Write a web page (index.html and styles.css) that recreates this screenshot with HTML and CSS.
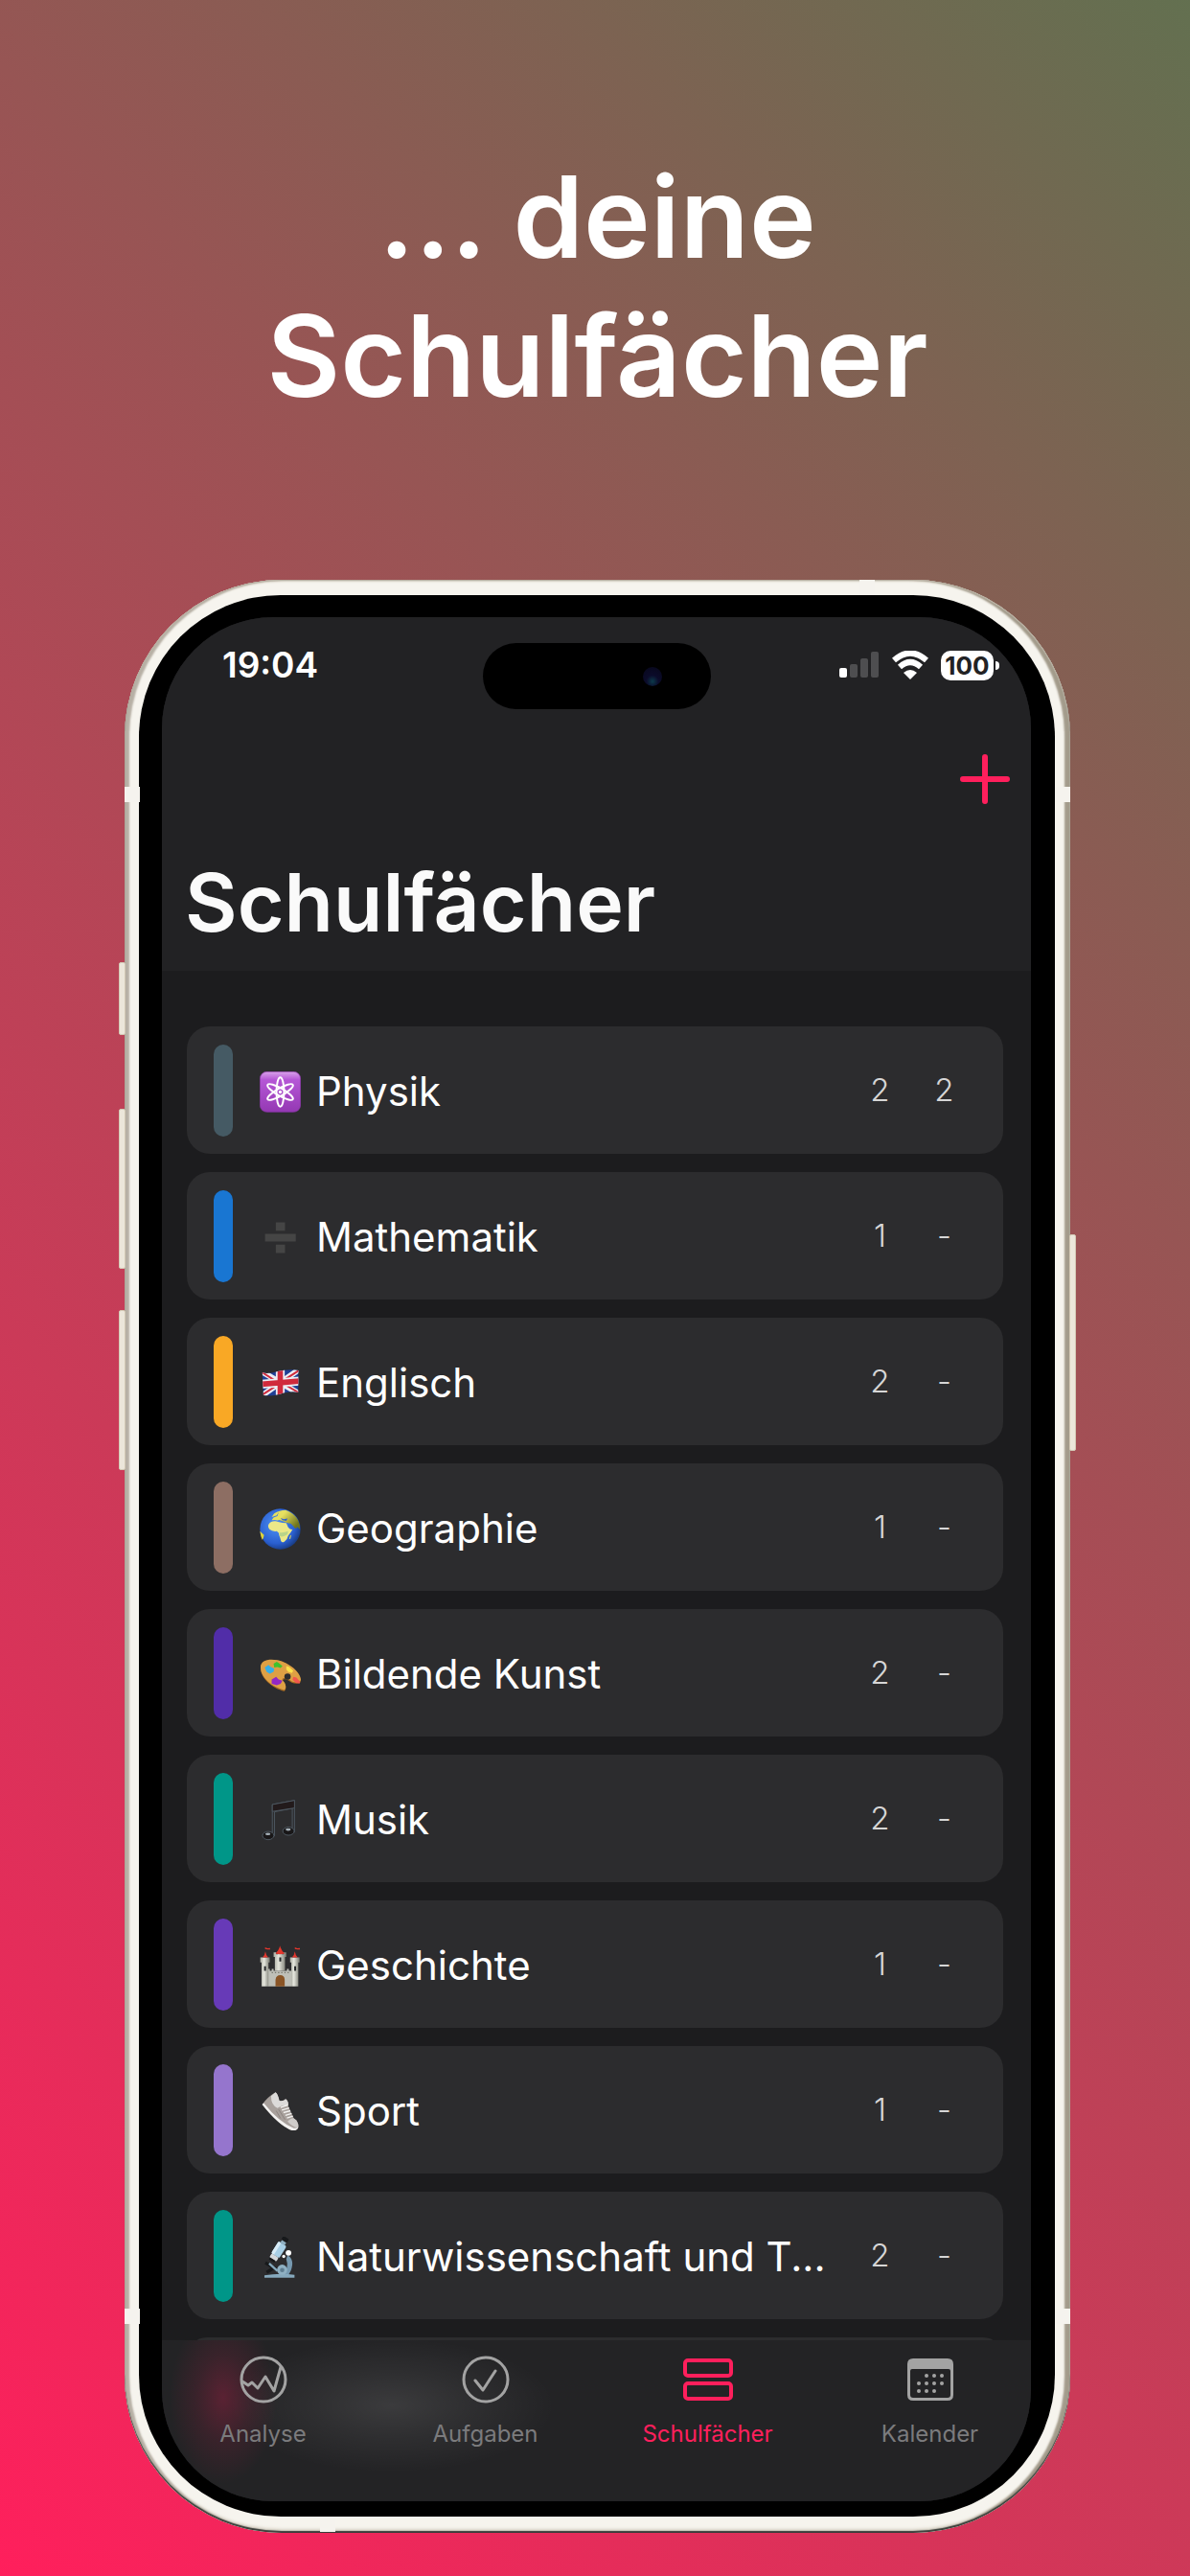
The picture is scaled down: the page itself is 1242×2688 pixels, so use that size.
FILE: index.html
```html
<!DOCTYPE html>
<html lang="de">
<head>
    <meta charset="UTF-8">
    <meta name="viewport" content="width=device-width, initial-scale=1.0">
    <title>Schulfächer</title>
    <link rel="stylesheet" href="styles.css">
</head>
<body>

<h1 class="headline">... deine<br>Schulfächer</h1>

<div class="phone">
    <span class="side-button mute"></span>
    <span class="side-button volume-up"></span>
    <span class="side-button volume-down"></span>
    <span class="side-button power"></span>
    <span class="antenna antenna-top"></span>
    <span class="antenna antenna-bottom"></span>
    <span class="antenna antenna-left upper"></span>
    <span class="antenna antenna-left lower"></span>
    <span class="antenna antenna-right upper"></span>
    <span class="antenna antenna-right lower"></span>

    <div class="bezel">
        <div class="screen">
            <header class="header">
                <div class="status-bar">
                    <span class="time">19:04</span>
                    <span class="island"><span class="camera"></span></span>
                    <span class="status-icons">
                        <svg class="signal" viewBox="0 0 42 28">
                            <rect x="0" y="17" width="8" height="10" rx="2" fill="#fff"/>
                            <rect x="11" y="13" width="8" height="14" rx="2" fill="#4e4e50"/>
                            <rect x="22" y="7" width="8" height="20" rx="2" fill="#4e4e50"/>
                            <rect x="33" y="0" width="8" height="27" rx="2" fill="#4e4e50"/>
                        </svg>
                        <svg class="wifi" viewBox="0 0 40 30">
                            <path d="M3 10Q20 -5 37 10" fill="none" stroke="#fff" stroke-width="6"/>
                            <path d="M9 17Q20 7 31 17" fill="none" stroke="#fff" stroke-width="6"/>
                            <path d="M13 23Q20 17 27 23L20 30Z" fill="#fff"/>
                        </svg>
                        <span class="battery">100</span>
                    </span>
                </div>
                <button class="add-button" type="button" aria-label="+">
                    <svg viewBox="0 0 52 52">
                        <path d="M26 3V49M3 26H49" stroke="#ff1f5c" stroke-width="6" stroke-linecap="round"/>
                    </svg>
                </button>
                <h2 class="title">Schulfächer</h2>
            </header>

            <ul class="subjects">
                <li class="subject">
                    <span class="color slate"></span>
                    <svg class="emoji" viewBox="0 0 130 130">
                        <defs>
                            <linearGradient id="atomBg" x1="0" y1="0" x2="0" y2="1">
                                <stop offset="0" stop-color="#d9a3ea"/>
                                <stop offset=".2" stop-color="#b557d6"/>
                                <stop offset="1" stop-color="#9438b3"/>
                            </linearGradient>
                        </defs>
                        <rect x="1" y="1" width="128" height="127" rx="22" fill="url(#atomBg)" stroke="#8d36ac" stroke-width="2"/>
                        <g fill="none" stroke="#fff" stroke-width="6">
                            <ellipse cx="65" cy="65" rx="12" ry="46"/>
                            <ellipse cx="65" cy="65" rx="12" ry="46" transform="rotate(60 65 65)"/>
                            <ellipse cx="65" cy="65" rx="12" ry="46" transform="rotate(120 65 65)"/>
                        </g>
                        <circle cx="65" cy="65" r="5" fill="#fff"/>
                    </svg>
                    <span class="name">Physik</span>
                    <span class="count">2</span>
                    <span class="count">2</span>
                </li>
                <li class="subject">
                    <span class="color blue"></span>
                    <svg class="emoji" viewBox="0 0 130 130">
                        <path d="M51 17h29v26H51zM17 53h97v24H17zM51 87h29v26H51z" fill="#454545"/>
                    </svg>
                    <span class="name">Mathematik</span>
                    <span class="count">1</span>
                    <span class="count">-</span>
                </li>
                <li class="subject">
                    <span class="color orange"></span>
                    <svg class="emoji" viewBox="0 0 130 130">
                        <defs>
                            <clipPath id="flag">
                                <path d="M8 30C35 42 70 14 123 24L122 93C80 84 55 110 12 103Z"/>
                            </clipPath>
                        </defs>
                        <g clip-path="url(#flag)">
                            <path d="M0 10H130V120H0Z" fill="#1f3f94"/>
                            <path d="M4 26L126 99M4 106L126 20" stroke="#eceef4" stroke-width="18"/>
                            <path d="M4 28L64 66M68 62L126 96M4 104L62 66M68 60L126 23" stroke="#d02a3c" stroke-width="6"/>
                            <path d="M65 15V115M0 68Q60 64 130 57" stroke="#eceef4" stroke-width="28" fill="none"/>
                            <path d="M65 15V115M0 68Q60 64 130 57" stroke="#d02a3c" stroke-width="17" fill="none"/>
                        </g>
                    </svg>
                    <span class="name">Englisch</span>
                    <span class="count">2</span>
                    <span class="count">-</span>
                </li>
                <li class="subject">
                    <span class="color brown"></span>
                    <svg class="emoji" viewBox="0 0 130 130">
                        <defs>
                            <radialGradient id="sea" cx=".4" cy=".4" r=".65">
                                <stop offset="0" stop-color="#4f93f5"/>
                                <stop offset=".7" stop-color="#2a5fd0"/>
                                <stop offset="1" stop-color="#173a80"/>
                            </radialGradient>
                            <linearGradient id="land" x1="0" y1="0" x2="1" y2=".6">
                                <stop offset=".4" stop-color="#e6e060"/>
                                <stop offset="1" stop-color="#6f741e"/>
                            </linearGradient>
                        </defs>
                        <circle cx="65" cy="65" r="64" fill="url(#sea)"/>
                        <path d="M38 27L46 16Q62 5 82 5Q108 14 121 36Q128 50 127 66L119 58Q113 68 107 57L99 48L86 45L72 40L62 36L56 38L48 36L38 37L44 29L56 24L60 12L54 22Z" fill="url(#land)"/>
                        <path d="M66 30L76 34L88 32L84 39L72 37Z" fill="#2a5fd0"/>
                        <path d="M27 54Q30 43 42 41Q50 39 58 42Q72 46 84 46L90 60Q95 68 104 66Q98 78 90 86Q88 98 78 105Q70 110 67 102Q65 92 62 86Q62 76 54 72Q40 74 31 66Q26 60 27 54Z" fill="#ece888"/>
                        <path d="M62 76Q76 78 90 72L88 82Q74 92 64 88Z" fill="#b9d489"/>
                        <path d="M96 86l4 -3l-3 13l-4 1z" fill="#d8d35c"/>
                        <path d="M1 72L14 84Q12 96 8 99Q3 88 1 72Z" fill="#ddd33c"/>
                    </svg>
                    <span class="name">Geographie</span>
                    <span class="count">1</span>
                    <span class="count">-</span>
                </li>
                <li class="subject">
                    <span class="color indigo"></span>
                    <svg class="emoji" viewBox="0 0 130 130">
                        <path d="M3 42C4 22 28 14 55 20C95 28 128 60 130 84C128 96 112 94 101 90C90 82 74 74 73 85C84 93 86 112 78 117C40 108 2 76 3 42Z" fill="#a66a22"/>
                        <path d="M3 40C4 20 28 14 55 19C95 27 128 58 130 80C128 92 112 90 101 86C90 78 72 70 71 82C82 90 86 108 78 113C40 104 2 74 3 40Z" fill="#dea044"/>
                        <circle cx="88" cy="71" r="10" fill="#2c2c2e"/>
                        <path d="M16 42l12 -8l6 6l12 6l-2 10l-12 6l-10 -6z" fill="#36aee8"/>
                        <path d="M44 30l10 -6l6 4l12 10l-6 6l-10 -3l-10 1z" fill="#3fc22e"/>
                        <path d="M84 38l8 2l14 12l-4 8l-12 -4l-6 -8z" fill="#fbe04a"/>
                        <path d="M106 72l10 2l12 14l-2 5l-12 -2l-10 -10z" fill="#f4574c"/>
                        <path d="M38 80l14 -8l8 8l12 4l-6 10l-12 4l-16 -4z" fill="#9227c4"/>
                    </svg>
                    <span class="name">Bildende Kunst</span>
                    <span class="count">2</span>
                    <span class="count">-</span>
                </li>
                <li class="subject">
                    <span class="color teal"></span>
                    <svg class="emoji" viewBox="0 0 130 130">
                        <g fill="#191718" stroke="#4d5760" stroke-width="3">
                            <path d="M40 15L110 2V102H103V27L47 38V114H40Z" fill="none"/>
                            <path d="M40 15L110 2V26L40 37Z" fill="#221a1b"/>
                            <ellipse cx="27" cy="113" rx="18" ry="13"/>
                            <ellipse cx="91" cy="99" rx="18" ry="13"/>
                        </g>
                        <ellipse cx="26" cy="108" rx="8" ry="4" fill="#a5b0b8"/>
                        <ellipse cx="90" cy="94" rx="8" ry="4" fill="#a5b0b8"/>
                    </svg>
                    <span class="name">Musik</span>
                    <span class="count">2</span>
                    <span class="count">-</span>
                </li>
                <li class="subject">
                    <span class="color purple"></span>
                    <svg class="emoji" viewBox="0 0 130 130">
                        <defs>
                            <linearGradient id="stone">
                                <stop offset="0" stop-color="#a9aaa0"/>
                                <stop offset=".4" stop-color="#e6e7de"/>
                                <stop offset="1" stop-color="#77786f"/>
                            </linearGradient>
                        </defs>
                        <path d="M26 74h6v6h6v-6h6v6h42v-6h6v6h8v49H26Z" fill="#bfc0b8"/>
                        <path d="M44 22h8v6h6v-6h12v6h6v-6h8v14h-4v44H48V36h-4Z" fill="url(#stone)"/>
                        <path d="M2 38h30v16h-4v75H6V54H2Z" fill="url(#stone)"/>
                        <path d="M96 38h30v16h-4v75h-22V54h-4Z" fill="url(#stone)"/>
                        <path d="M38 84h4v4h-4zM48 84h4v4h-4zM58 84h4v4h-4zM68 84h4v4h-4zM78 84h4v4h-4zM88 84h4v4h-4z" fill="#77786f"/>
                        <path d="M64 1Q68 16 79 26Q64 30 50 26Q62 14 64 1ZM18 19Q20 32 27 38H9Q17 30 18 19ZM111 19Q113 32 120 38H102Q110 30 111 19ZM17 6l8 3l8 -1v5l-8 0l-8 -2zM111 6l8 3l8 -1v5l-8 0l-8 -2z" fill="#e3362c"/>
                        <path d="M50 129V108Q52 94 65 94Q78 94 79 108V129Z" fill="#8a5526"/>
                        <path d="M62 38h6v13h-6zM14 66h6v14h-6zM109 66h6v14h-6z" fill="#26282a"/>
                    </svg>
                    <span class="name">Geschichte</span>
                    <span class="count">1</span>
                    <span class="count">-</span>
                </li>
                <li class="subject">
                    <span class="color lavender"></span>
                    <svg class="emoji" viewBox="0 0 130 130">
                        <path d="M8 42Q26 18 50 4Q57 8 62 30Q74 34 82 25Q92 32 90 46Q100 70 108 86Q124 96 122 114Q118 126 102 124Q60 108 8 42Z" fill="#a8a09c"/>
                        <path d="M50 4Q57 8 62 30Q74 34 82 25Q92 32 90 46Q70 42 56 54Q36 44 36 16Z" fill="#dcdad9"/>
                        <path d="M88 96Q100 84 108 86Q124 96 122 114Q108 118 88 96Z" fill="#cfccca"/>
                        <path d="M8 42L13 38Q60 98 108 117Q116 118 122 114Q118 126 102 124Q60 108 8 42Z" fill="#f3f2f1"/>
                        <path d="M66 52L88 44M70 60L93 53M75 68L97 62M81 77L101 71M86 85L105 79" stroke="#f3f2f1" stroke-width="4"/>
                        <path d="M52 62L66 86M60 58L80 90" stroke="#8c8480" stroke-width="3"/>
                    </svg>
                    <span class="name">Sport</span>
                    <span class="count">1</span>
                    <span class="count">-</span>
                </li>
                <li class="subject">
                    <span class="color teal"></span>
                    <svg class="emoji" viewBox="0 0 130 130">
                        <path d="M88 58Q112 72 98 108L90 122H72Q94 98 84 70Z" fill="#7699b0"/>
                        <path d="M15 122Q60 114 110 120V129H15Z" fill="#86a9bd"/>
                        <path d="M18 82L52 102M22 112L42 100" stroke="#17191b" stroke-width="10"/>
                        <path d="M30 84L56 108" stroke="#86a9bd" stroke-width="7"/>
                        <circle cx="71" cy="104" r="16" fill="#8fb0c2"/>
                        <circle cx="71" cy="105" r="7" fill="#5e7d90"/>
                        <g transform="rotate(32 55 48)">
                            <rect x="41" y="17" width="30" height="44" rx="5" fill="#a8cfe6"/>
                            <rect x="41" y="17" width="10" height="44" rx="5" fill="#d8ecf7"/>
                            <rect x="43" y="61" width="26" height="14" rx="4" fill="#d5d9dc"/>
                            <rect x="45" y="74" width="20" height="7" fill="#17191b"/>
                            <rect x="48" y="8" width="16" height="10" fill="#8fb0c2"/>
                            <rect x="45" y="-6" width="21" height="13" rx="4" fill="#17191b"/>
                        </g>
                        <circle cx="91" cy="51" r="9" fill="#fff"/>
                        <circle cx="76" cy="62" r="5" fill="#fff"/>
                    </svg>
                    <span class="name">Naturwissenschaft und T...</span>
                    <span class="count">2</span>
                    <span class="count">-</span>
                </li>
                <li class="subject partial"></li>
            </ul>

            <nav class="tab-bar">
                <a class="tab" href="#">
                    <svg viewBox="0 0 52 52" fill="none" stroke="#a3a3a3" stroke-width="3" stroke-linejoin="round">
                        <circle cx="26" cy="26" r="23"/>
                        <path d="M4 28L10 32L14 29L20 35L28 23L37 38L44 13" stroke-linecap="round"/>
                    </svg>
                    Analyse
                </a>
                <a class="tab" href="#">
                    <svg viewBox="0 0 52 52" fill="none" stroke="#a3a3a3" stroke-width="3" stroke-linejoin="round">
                        <circle cx="26" cy="26" r="23"/>
                        <path d="M15 27L23 37L36 17" stroke-linecap="round"/>
                    </svg>
                    Aufgaben
                </a>
                <a class="tab active" href="#">
                    <svg viewBox="0 0 52 52" fill="none" stroke="#ff1f5c" stroke-width="4">
                        <rect x="2" y="6" width="48" height="16" rx="3"/>
                        <rect x="2" y="30" width="48" height="16" rx="3"/>
                    </svg>
                    Schulfächer
                </a>
                <a class="tab" href="#">
                    <svg viewBox="0 0 52 52">
                        <path d="M8 4H44Q50 4 50 10V42Q50 48 44 48H8Q2 48 2 42V10Q2 4 8 4ZM7 15Q5 15 5 17V42Q5 45 8 45H44Q47 45 47 42V17Q47 15 45 15Z" fill="#a3a3a3" fill-rule="evenodd"/>
                        <g fill="#a3a3a3">
                            <circle cx="22" cy="22" r="2"/><circle cx="30" cy="22" r="2"/><circle cx="38" cy="22" r="2"/>
                            <circle cx="14" cy="30" r="2"/><circle cx="22" cy="30" r="2"/><circle cx="30" cy="30" r="2"/><circle cx="38" cy="30" r="2"/>
                            <circle cx="14" cy="38" r="2"/><circle cx="22" cy="38" r="2"/><circle cx="30" cy="38" r="2"/>
                        </g>
                    </svg>
                    Kalender
                </a>
            </nav>
        </div>
    </div>
</div>

</body>
</html>
```

FILE: styles.css
```css
* {
    box-sizing: border-box;
}
body {
    margin: 0;
    padding: 154px 125px 45px 130px;
    font-family: Inter, "Liberation Sans", sans-serif;
    color: #fff;
    background: linear-gradient(45deg, #ff1f5c, #637050);
}
.headline {
    margin: 0 0 161px;
    font-size: 118px;
    font-weight: 600;
    line-height: 145px;
    text-align: center;
}

/* phone frame */
.phone {
    position: relative;
    padding: 16px 16px 17px 15px;
    border-radius: 164px;
    background: #f6f4ee;
    box-shadow:
        inset 0 -2px 1px #3a3d3a,
        inset 0 0 0 1px #b9b2a4,
        inset 5px 0 2px #b7b0a5,
        inset -6px 0 2px #a39b8b,
        inset 0 2px 2px #d8d2c6,
        inset 0 -4px 3px #d8d2c6;
}
.side-button {
    position: absolute;
    width: 7px;
    border-radius: 2px;
    background: #ece6da;
    border: 1px solid #d3c9b5;
}
.mute {
    left: -6px;
    top: 399px;
    height: 76px;
}
.volume-up {
    left: -6px;
    top: 552px;
    height: 167px;
}
.volume-down {
    left: -6px;
    top: 762px;
    height: 167px;
}
.power {
    right: -6px;
    top: 683px;
    height: 226px;
}
.antenna {
    position: absolute;
    width: 16px;
    height: 16px;
    background: #f5f3ee;
}
.antenna-top {
    top: 0;
    right: 204px;
}
.antenna-bottom {
    bottom: 1px;
    left: 204px;
}
.antenna-left {
    left: 0;
}
.antenna-right {
    right: 0;
}
.upper {
    top: 216px;
}
.lower {
    bottom: 218px;
}
.bezel {
    padding: 23px 25px 16px 24px;
    border-radius: 148px;
    background: #000;
}
.screen {
    overflow: hidden;
    border-radius: 116px;
    background: #1c1c1e;
}

/* header */
.header {
    padding: 27px 22px 21px;
    background: #222224;
}
.status-bar {
    display: grid;
    grid-template-columns: 1fr 238px 1fr;
    align-items: start;
}
.time {
    padding-left: 41px;
    font-size: 37px;
    font-weight: 600;
    line-height: 46px;
}
.island {
    display: flex;
    align-items: center;
    justify-content: flex-end;
    height: 69px;
    padding-right: 51px;
    border-radius: 35px;
    background: #000;
}
.camera {
    width: 20px;
    height: 20px;
    border-radius: 50%;
    background: radial-gradient(circle at 50% 75%, #0c3a4a, #0b0b2a 35%, #07071a);
}
.status-icons {
    display: flex;
    align-items: center;
    justify-content: flex-end;
    gap: 12px;
    height: 46px;
    padding-right: 17px;
}
.signal {
    width: 42px;
    height: 28px;
}
.wifi {
    width: 40px;
    height: 30px;
}
.battery {
    position: relative;
    width: 55px;
    border-radius: 10px;
    background: #fff;
    color: #222224;
    font-size: 26px;
    font-weight: 700;
    line-height: 31px;
    text-align: center;
}
.battery::after {
    content: "";
    position: absolute;
    top: 11px;
    right: -6px;
    width: 4px;
    height: 9px;
    border-radius: 0 4px 4px 0;
    background: #fff;
}
.add-button {
    display: block;
    width: 52px;
    height: 52px;
    margin: 47px 0 0 auto;
    padding: 0;
    border: none;
    background: none;
    cursor: pointer;
}
.title {
    margin: 53px 0 0;
    padding-left: 2px;
    color: #fafafa;
    font-size: 84px;
    font-weight: 600;
    line-height: 100px;
}

/* subject list */
.subjects {
    display: flex;
    flex-direction: column;
    gap: 19px;
    margin: 0;
    padding: 58px 29px 0 26px;
    list-style: none;
}
.subject {
    display: flex;
    align-items: center;
    height: 133px;
    padding: 0 28px;
    border-radius: 24px;
    background: #2c2c2e;
}
.partial {
    height: 42px;
}
.color {
    width: 20px;
    height: 96px;
    margin-right: 28px;
    border-radius: 10px;
}
.slate { background: #455a64; }
.blue { background: #1976d2; }
.orange { background: #f9a825; }
.brown { background: #8d6e63; }
.indigo { background: #512da8; }
.teal { background: #009688; }
.purple { background: #673ab7; }
.lavender { background: #9575cd; }
.emoji {
    width: 43px;
    height: 43px;
    margin: 4px 16px 0 0;
}
.name {
    flex: 1;
    padding-top: 2px;
    font-size: 42px;
    font-weight: 400;
    white-space: nowrap;
}
.count {
    width: 67px;
    color: #d6d6d6;
    font-size: 33px;
    font-weight: 300;
    line-height: 40px;
    padding-bottom: 2px;
    text-align: center;
}

.tab-bar {
    position: relative;
    display: grid;
    grid-template-columns: repeat(4, 232px);
    justify-content: center;
    height: 168px;
    margin-top: -39px;
    padding-top: 15px;
    background:
        radial-gradient(ellipse 56px 90px at 64px 60px, rgba(255, 31, 92, 0.25), rgba(255, 31, 92, 0.1) 50%, transparent),
        radial-gradient(ellipse 170px 70px at 240px 68px, rgba(255, 255, 255, 0.11), rgba(255, 255, 255, 0.05) 50%, transparent),
        #232325;
}
.tab {
    display: flex;
    flex-direction: column;
    align-items: center;
    gap: 17px;
    color: #7b7b7d;
    font-size: 24px;
    font-weight: 400;
    line-height: 28px;
    text-decoration: none;
}
.tab svg {
    width: 52px;
    height: 52px;
}
.active {
    color: #ff1f5c;
}
```
